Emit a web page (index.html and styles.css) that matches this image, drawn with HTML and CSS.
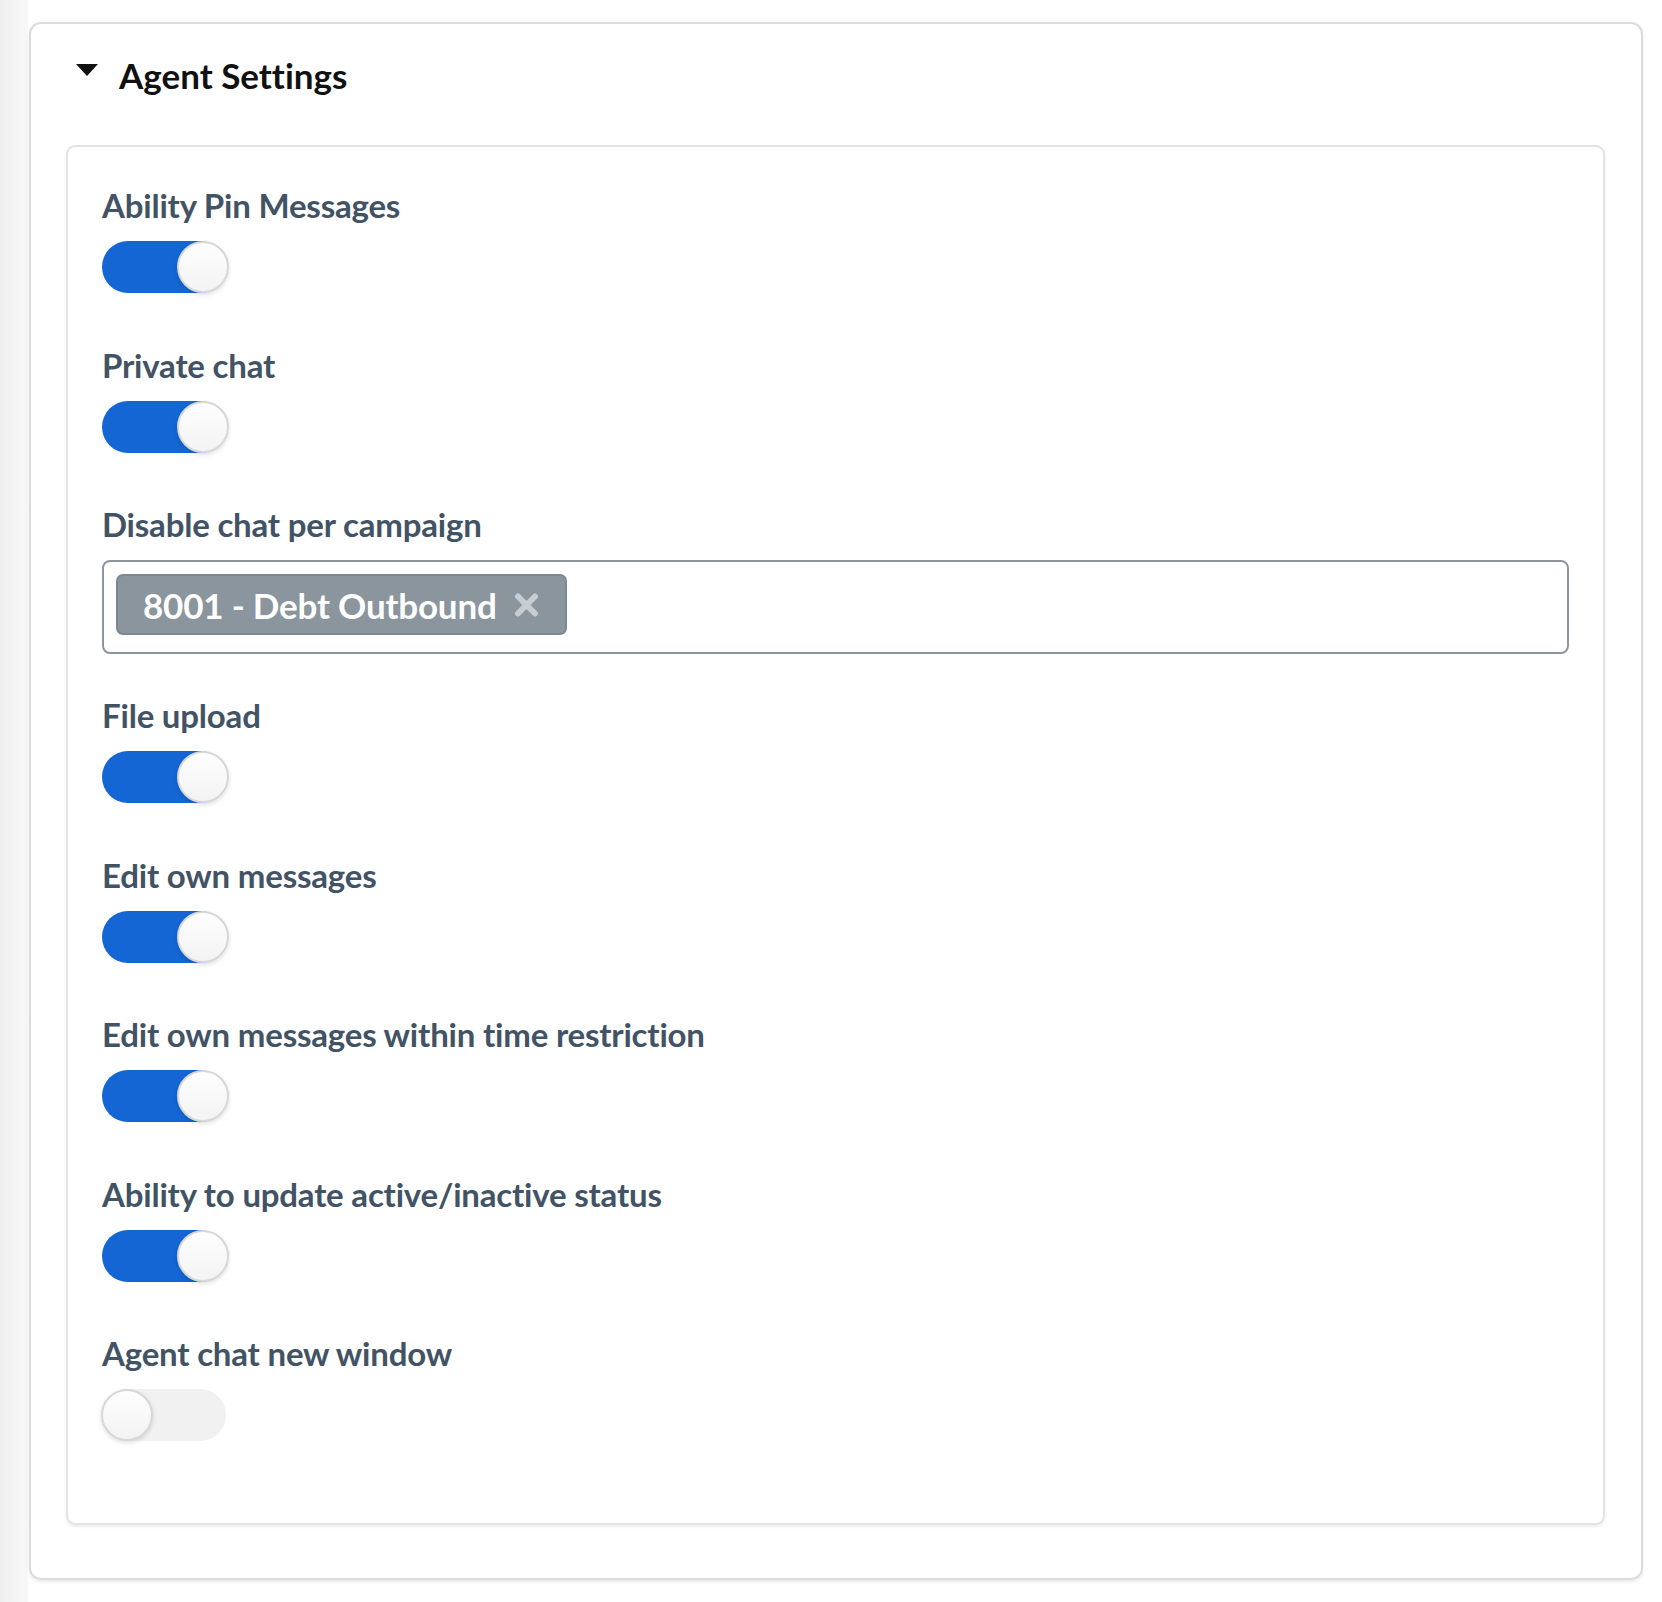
FILE: index.html
```html
<!DOCTYPE html>
<html lang="en">
<head>
    <meta charset="UTF-8">
    <meta name="viewport" content="width=device-width, initial-scale=1.0">
    <title>Agent Settings</title>
    <link rel="stylesheet" href="styles.css">
</head>
<body>
    <div class="page">
        <div class="side-edge"></div>
        <section class="panel">
            <h2 class="panel-title"><span class="caret"></span>Agent Settings</h2>
            <div class="settings-card">
                <div class="field">
                    <label class="field-label">Ability Pin Messages</label>
                    <span class="switch on"><span class="thumb"></span></span>
                </div>
                <div class="field">
                    <label class="field-label">Private chat</label>
                    <span class="switch on"><span class="thumb"></span></span>
                </div>
                <div class="field field-select">
                    <label class="field-label">Disable chat per campaign</label>
                    <div class="tag-select">
                        <span class="tag">8001 - Debt Outbound
                            <svg class="tag-remove" width="25" height="24" viewBox="0 0 25 24">
                                <path d="M4 3.5 L21 20.5 M21 3.5 L4 20.5" stroke="#c8cdd2" stroke-width="6" stroke-linecap="round"/>
                            </svg>
                        </span>
                    </div>
                </div>
                <div class="field">
                    <label class="field-label">File upload</label>
                    <span class="switch on"><span class="thumb"></span></span>
                </div>
                <div class="field">
                    <label class="field-label">Edit own messages</label>
                    <span class="switch on"><span class="thumb"></span></span>
                </div>
                <div class="field">
                    <label class="field-label">Edit own messages within time restriction</label>
                    <span class="switch on"><span class="thumb"></span></span>
                </div>
                <div class="field">
                    <label class="field-label">Ability to update active/inactive status</label>
                    <span class="switch on"><span class="thumb"></span></span>
                </div>
                <div class="field">
                    <label class="field-label">Agent chat new window</label>
                    <span class="switch"><span class="thumb"></span></span>
                </div>
            </div>
        </section>
    </div>
</body>
</html>
```

FILE: styles.css
```css
body {
    margin: 0;
    background-color: #fff;
    font-family: Lato, "Open Sans", sans-serif;
    font-variant-ligatures: no-common-ligatures;
}
.page {
    display: flex;
    min-height: 100vh;
}
.side-edge {
    width: 28px;
    flex-shrink: 0;
    background: linear-gradient(to right, #efefef, #f8f8f8);
}
.panel {
    flex: 1;
    margin: 22px 19px 22px 1px;
    align-self: flex-start;
    border: 2px solid #dcdcdc;
    border-radius: 12px;
    box-shadow: 0 2px 3px rgba(0, 0, 0, 0.08);
    padding: 0 36px 53px 35px;
}
.panel-title {
    display: flex;
    align-items: center;
    margin: 0;
    padding: 29px 0 48px 10px;
    font-size: 35px;
    line-height: 44px;
    font-weight: 700;
    color: #111;
}
.caret {
    width: 0;
    height: 0;
    border-left: 11px solid transparent;
    border-right: 11px solid transparent;
    border-top: 12px solid #111;
    margin: 0 21px 10px 0;
}
.settings-card {
    border: 2px solid #e3e3e3;
    border-radius: 9px;
    box-shadow: 0 2px 3px rgba(0, 0, 0, 0.07);
    padding: 40px 34px 28px 34px;
}
.field {
    display: flex;
    flex-direction: column;
    align-items: flex-start;
    margin-bottom: 53.5px;
}
.field-select {
    align-items: stretch;
    margin-bottom: 43px;
}
.field-label {
    font-size: 33px;
    line-height: 36px;
    font-weight: 700;
    letter-spacing: -0.2px;
    color: #425365;
    margin-bottom: 18px;
}
.switch {
    position: relative;
    display: block;
    width: 124px;
    height: 52px;
    border-radius: 26px;
    background-color: #f1f1f1;
}
.switch.on {
    background-color: #1366d4;
}
.thumb {
    position: absolute;
    top: 0;
    left: -1px;
    width: 48px;
    height: 48px;
    border-radius: 50%;
    border: 2px solid #d7d7d7;
    background: linear-gradient(to bottom, #fefefe, #f3f3f3);
    box-shadow: 0 2px 4px rgba(0, 0, 0, 0.12);
}
.switch.on .thumb {
    left: 75px;
}
.tag-select {
    box-sizing: border-box;
    height: 94px;
    border: 2px solid #8d969f;
    border-radius: 8px;
    padding: 12px;
}
.tag {
    display: inline-flex;
    align-items: center;
    box-sizing: border-box;
    height: 61px;
    padding: 0 26px 0 25px;
    border: 2px solid #7e8891;
    border-radius: 7px;
    background-color: #8b959e;
    color: #fff;
    font-size: 35px;
    font-weight: 700;
    letter-spacing: -0.2px;
}
.tag-remove {
    margin-left: 17px;
}
```
